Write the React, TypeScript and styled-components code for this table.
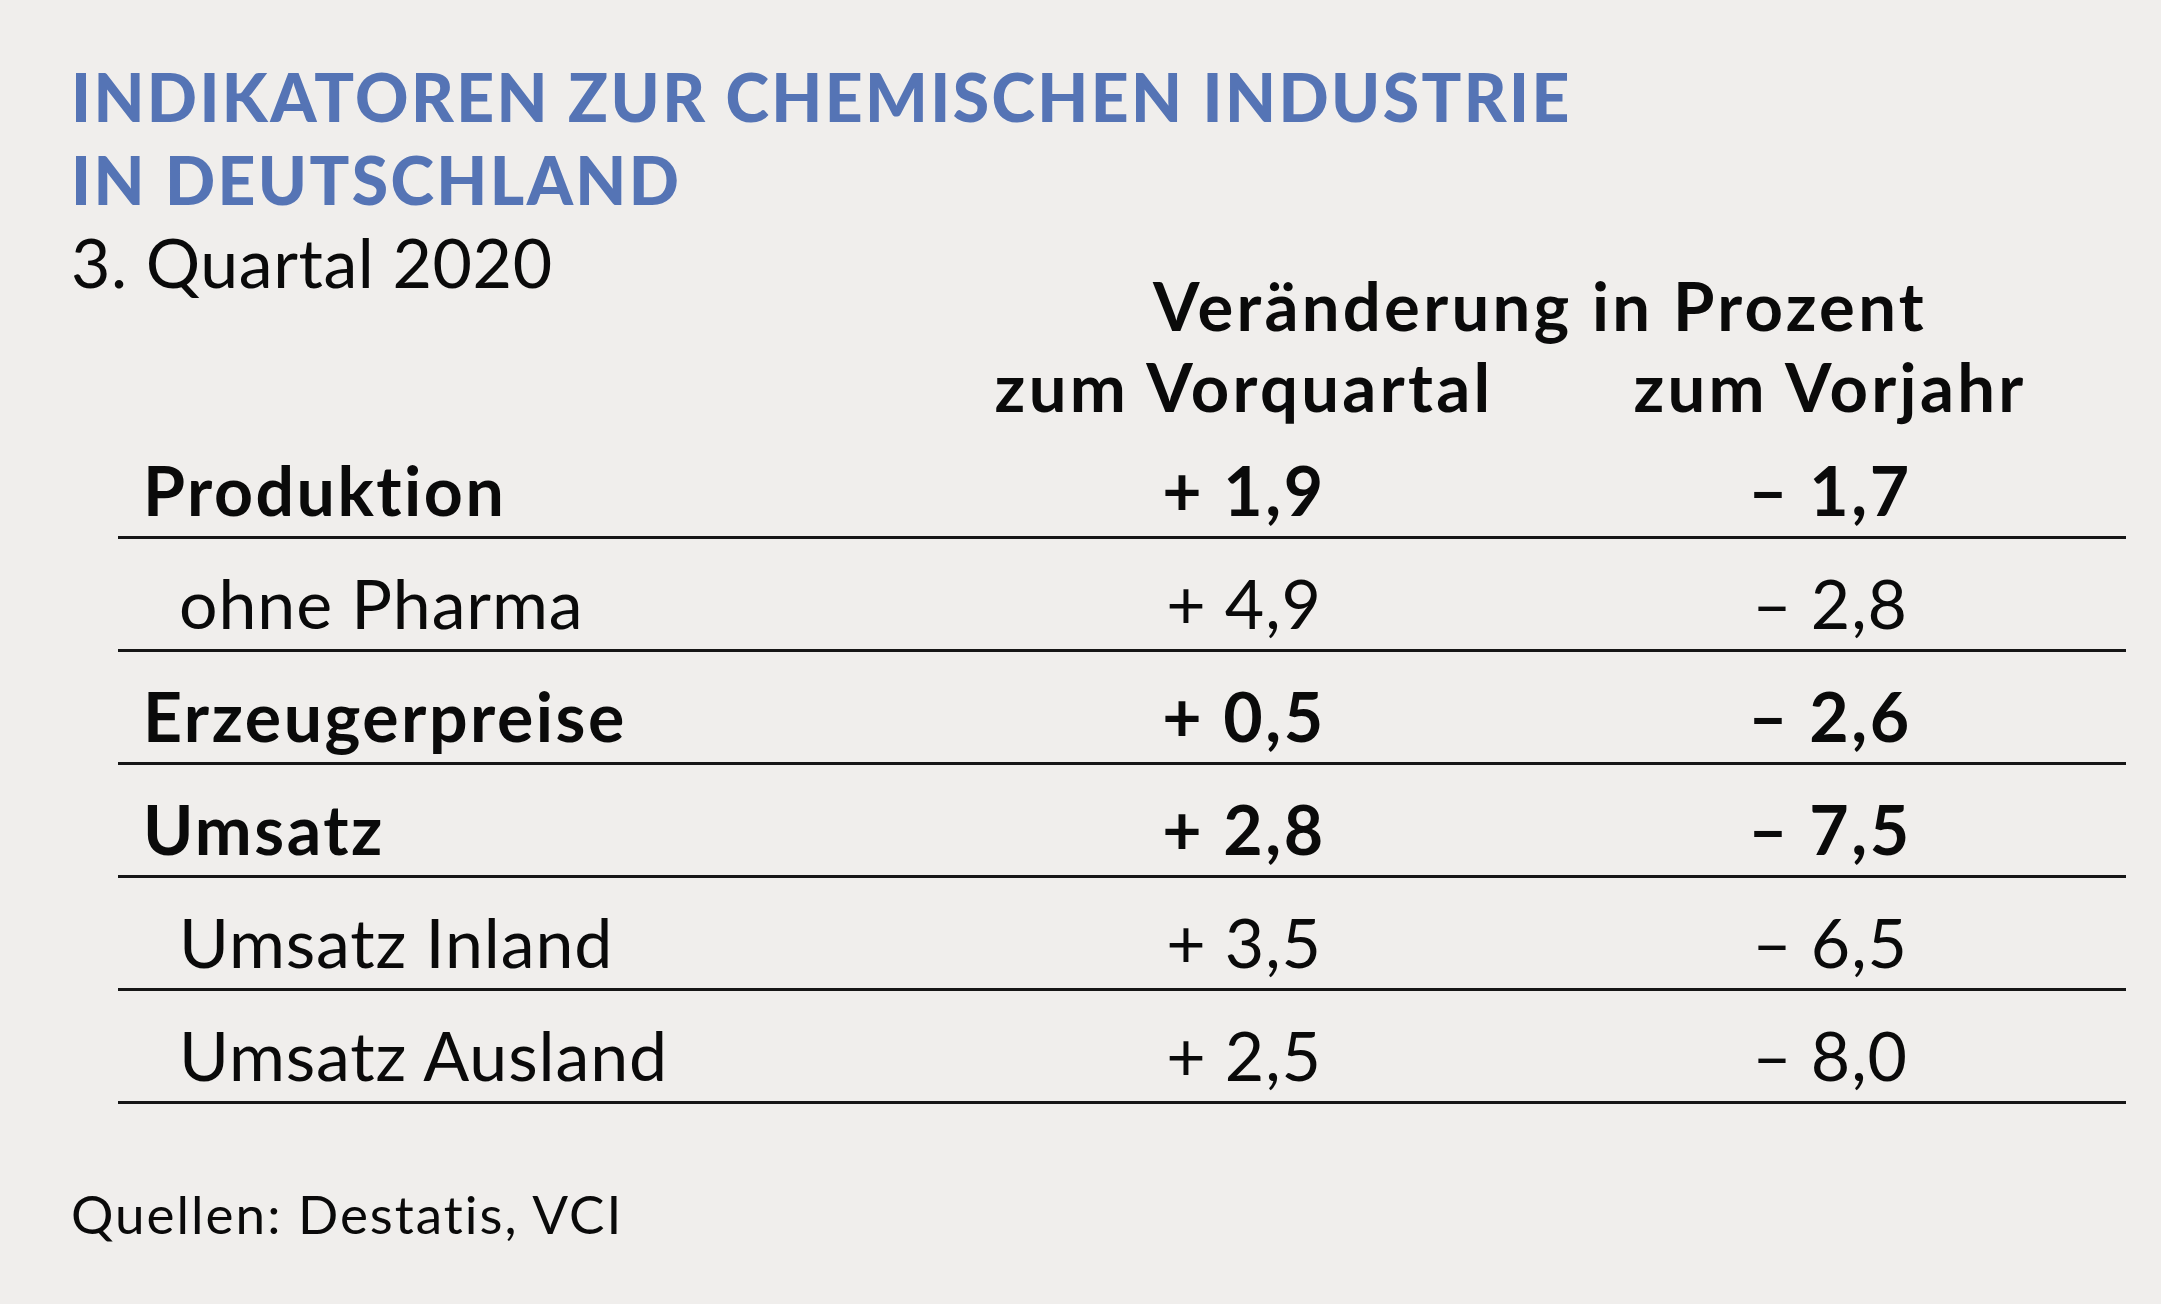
import React from "react";
import styled, { createGlobalStyle } from "styled-components";

const GlobalStyle = createGlobalStyle`
  html, body {
    margin: 0;
    padding: 0;
    background: #f0eeec;
  }
  body {
    font-family: Lato, "Open Sans", "Liberation Sans", sans-serif;
    color: #0a0a0a;
  }
`;

const Page = styled.div`
  width: 2161px;
  height: 1304px;
  box-sizing: border-box;
  padding: 55px 0 0 71px;
  background: #f0eeec;
`;

const Title = styled.h1`
  margin: 0;
  font-size: 66px;
  line-height: 83px;
  font-weight: 900;
  letter-spacing: 2.4px;
  color: #5574b5;
  text-transform: uppercase;
`;

const Subtitle = styled.div`
  font-size: 68px;
  line-height: 68px;
  font-weight: 400;
  letter-spacing: 0.6px;
  margin-top: 7px;
`;

const Table = styled.div`
  display: grid;
  grid-template-columns: 47px 836px 580px 592px;
  margin-top: -25px;
`;

const HeadCell = styled.div<{ $span?: string }>`
  grid-column: ${(p) => p.$span ?? "auto"};
  font-size: 67px;
  line-height: 68px;
  font-weight: 700;
  letter-spacing: 3.3px;
  text-align: center;
  white-space: nowrap;
`;

const SubHead = styled.div`
  grid-column: 1 / -1;
  display: grid;
  grid-template-columns: subgrid;
  margin-top: 13px;
  margin-bottom: 6px;
`;

const Row = styled.div<{ $strong?: boolean }>`
  grid-column: 2 / -1;
  display: grid;
  grid-template-columns: subgrid;
  align-items: end;
  height: 110px;
  border-bottom: 3px solid #161616;
  font-size: 68px;
  line-height: 68px;
  font-weight: ${(p) => (p.$strong ? 700 : 400)};
  letter-spacing: ${(p) => (p.$strong ? "2.5px" : "0.9px")};
`;

const Label = styled.div<{ $indent?: boolean }>`
  padding-left: ${(p) => (p.$indent ? "61px" : "25px")};
  padding-bottom: 12px;
  white-space: nowrap;
`;

const Value = styled.div`
  text-align: center;
  padding-bottom: 12px;
  white-space: nowrap;
`;

const Source = styled.div`
  font-size: 53px;
  line-height: 53px;
  letter-spacing: 2px;
  margin-top: 83px;
`;

type Entry = {
  label: string;
  quarter: string;
  year: string;
  strong?: boolean;
};

const rows: Entry[] = [
  { label: "Produktion", quarter: "+ 1,9", year: "– 1,7", strong: true },
  { label: "ohne Pharma", quarter: "+ 4,9", year: "– 2,8" },
  { label: "Erzeugerpreise", quarter: "+ 0,5", year: "– 2,6", strong: true },
  { label: "Umsatz", quarter: "+ 2,8", year: "– 7,5", strong: true },
  { label: "Umsatz Inland", quarter: "+ 3,5", year: "– 6,5" },
  { label: "Umsatz Ausland", quarter: "+ 2,5", year: "– 8,0" },
];

export default function App() {
  return (
    <Page>
      <GlobalStyle />
      <Title>
        Indikatoren zur chemischen Industrie
        <br />
        in Deutschland
      </Title>
      <Subtitle>3. Quartal 2020</Subtitle>
      <Table>
        <HeadCell $span="3 / 5">Veränderung in Prozent</HeadCell>
        <SubHead>
          <span />
          <span />
          <HeadCell>zum Vorquartal</HeadCell>
          <HeadCell>zum Vorjahr</HeadCell>
        </SubHead>
        {rows.map((r) => (
          <Row key={r.label} $strong={r.strong}>
            <Label $indent={!r.strong}>{r.label}</Label>
            <Value>{r.quarter}</Value>
            <Value>{r.year}</Value>
          </Row>
        ))}
      </Table>
      <Source>Quellen: Destatis, VCI</Source>
    </Page>
  );
}
